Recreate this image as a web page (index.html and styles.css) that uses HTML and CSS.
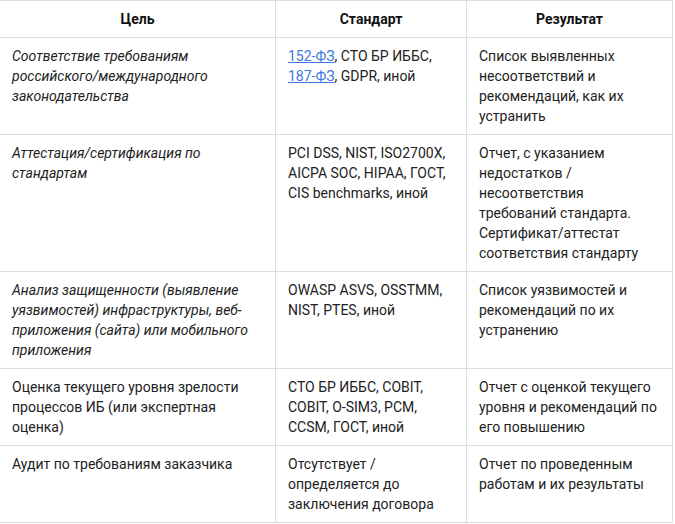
FILE: index.html
```html
<!DOCTYPE html>
<html lang="ru">
<head>
<meta charset="utf-8">
<link rel="stylesheet" href="styles.css">
</head>
<body>
<table class="audit">
  <colgroup>
    <col class="c1"><col class="c2"><col class="c3">
  </colgroup>
  <thead>
    <tr><th>Цель</th><th>Стандарт</th><th>Результат</th></tr>
  </thead>
  <tbody>
    <tr>
      <td class="em">Соответствие требованиям российского/международного законодательства</td>
      <td><a href="#">152-ФЗ</a>, СТО БР ИББС, <a href="#">187-ФЗ</a>, GDPR, иной</td>
      <td>Список выявленных несоответствий и рекомендаций, как их устранить</td>
    </tr>
    <tr>
      <td class="em">Аттестация/сертификация по стандартам</td>
      <td>PCI DSS, NIST, ISO2700X, AICPA SOC, HIPAA, ГОСТ, CIS benchmarks, иной</td>
      <td>Отчет, с указанием недостатков / несоответствия требований стандарта. Сертификат/аттестат соответствия стандарту</td>
    </tr>
    <tr>
      <td class="em">Анализ защищенности (выявление уязвимостей) инфраструктуры, веб-приложения (сайта) или мобильного приложения</td>
      <td>OWASP ASVS, OSSTMM, NIST, PTES, иной</td>
      <td>Список уязвимостей и рекомендаций по их устранению</td>
    </tr>
    <tr>
      <td>Оценка текущего уровня зрелости процессов ИБ (или экспертная оценка)</td>
      <td>СТО БР ИББС, COBIT, COBIT, O-SIM3, PCM, CCSM, ГОСТ, иной</td>
      <td>Отчет с оценкой текущего уровня и рекомендаций по его повышению</td>
    </tr>
    <tr>
      <td>Аудит по требованиям заказчика</td>
      <td>Отсутствует / определяется до заключения договора</td>
      <td>Отчет по проведенным работам и их результаты</td>
    </tr>
  </tbody>
</table>
</body>
</html>
```
FILE: styles.css
```css
html, body {
  margin: 0;
  padding: 0;
  background: #ffffff;
}
body {
  font-family: Roboto, "Liberation Sans", sans-serif;
  font-size: 14px;
  line-height: 20px;
  color: #222222;
  overflow: hidden;
}
.audit {
  border-collapse: collapse;
  table-layout: fixed;
  width: 673px;
  margin-left: -1px;
}
.c1 { width: 276px; }
.c2 { width: 191px; }
.c3 { width: 206px; }
.audit th,
.audit td {
  border: 1px solid #dddddd;
  padding: 8px 12px;
  vertical-align: top;
  text-align: left;
}
.audit th {
  font-weight: 700;
  text-align: center;
  color: #111111;
}
.audit td.em {
  font-style: italic;
}
.audit a {
  color: #3b78e0;
  text-decoration: underline;
}
```
